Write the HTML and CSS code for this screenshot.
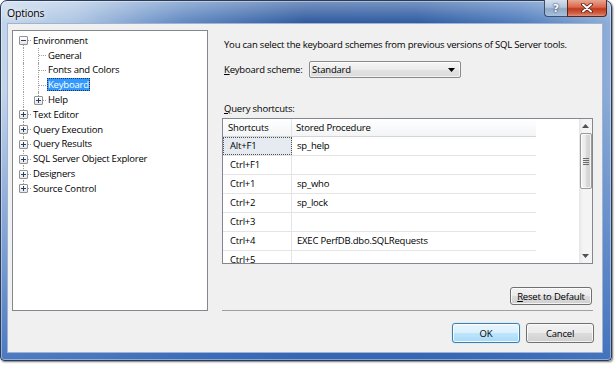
FILE: index.html
```html
<!DOCTYPE html>
<html>
<head>
<meta charset="utf-8">
<title>Options</title>
<link rel="stylesheet" href="styles.css">
</head>
<body>
<div class="window">
  <div class="titlebar">
    <span class="title">Options</span>
    <div class="caption-btns">
      <span class="cbtn help">?</span>
      <span class="cbtn close">
        <svg width="12" height="10" viewBox="0 0 12 10"><path d="M2 1.5 L10 8.5 M10 1.5 L2 8.5" stroke="#4a1a10" stroke-width="3.6" stroke-linecap="round"/><path d="M2 1.5 L10 8.5 M10 1.5 L2 8.5" stroke="#fff" stroke-width="2" stroke-linecap="round"/></svg>
      </span>
    </div>
  </div>
  <div class="client">
    <div class="main">
      <div class="tree">
        <div class="node"><span class="g first"><span class="exp minus"></span></span><span class="lbl">Environment</span></div>
        <div class="node"><span class="g v"></span><span class="g t"></span><span class="lbl">General</span></div>
        <div class="node"><span class="g v"></span><span class="g t"></span><span class="lbl">Fonts and Colors</span></div>
        <div class="node"><span class="g v"></span><span class="g t"></span><span class="lbl sel">Keyboard</span></div>
        <div class="node"><span class="g v"></span><span class="g l"><span class="exp plus"></span></span><span class="lbl">Help</span></div>
        <div class="node"><span class="g t"><span class="exp plus"></span></span><span class="lbl">Text Editor</span></div>
        <div class="node"><span class="g t"><span class="exp plus"></span></span><span class="lbl">Query Execution</span></div>
        <div class="node"><span class="g t"><span class="exp plus"></span></span><span class="lbl">Query Results</span></div>
        <div class="node"><span class="g t"><span class="exp plus"></span></span><span class="lbl">SQL Server Object Explorer</span></div>
        <div class="node"><span class="g t"><span class="exp plus"></span></span><span class="lbl">Designers</span></div>
        <div class="node"><span class="g l"><span class="exp plus"></span></span><span class="lbl">Source Control</span></div>
      </div>
      <div class="panel">
        <p class="desc">You can select the keyboard schemes from previous versions of SQL Server tools.</p>
        <div class="scheme">
          <span class="scheme-label"><u>K</u>eyboard scheme:</span>
          <div class="combo">
            <span>Standard</span>
            <svg width="7" height="4" viewBox="0 0 7 4"><path d="M0 0 H7 L3.5 4 Z" fill="#000"/></svg>
          </div>
        </div>
        <div class="qs-label"><u>Q</u>uery shortcuts:</div>
        <div class="grid">
          <div class="grid-body">
            <div class="hdr"><span class="c1">Shortcuts</span><span class="c2">Stored Procedure</span></div>
            <div class="row"><span class="c1 cur">Alt+F1</span><span class="c2">sp_help</span></div>
            <div class="row"><span class="c1">Ctrl+F1</span><span class="c2"></span></div>
            <div class="row"><span class="c1">Ctrl+1</span><span class="c2">sp_who</span></div>
            <div class="row"><span class="c1">Ctrl+2</span><span class="c2">sp_lock</span></div>
            <div class="row"><span class="c1">Ctrl+3</span><span class="c2"></span></div>
            <div class="row"><span class="c1">Ctrl+4</span><span class="c2">EXEC PerfDB.dbo.SQLRequests</span></div>
            <div class="row"><span class="c1">Ctrl+5</span><span class="c2"></span></div>
          </div>
          <div class="vscroll">
            <div class="sb-btn"><svg width="7" height="4" viewBox="0 0 7 4"><path d="M0 4 H7 L3.5 0 Z" fill="#505050"/></svg></div>
            <div class="thumb"><span class="grip"></span></div>
            <div class="track"></div>
            <div class="sb-btn"><svg width="7" height="4" viewBox="0 0 7 4"><path d="M0 0 H7 L3.5 4 Z" fill="#505050"/></svg></div>
          </div>
        </div>
        <div class="reset-row"><button class="btn reset"><u>R</u>eset to Default</button></div>
      </div>
    </div>
    <div class="footer">
      <button class="btn ok default">OK</button>
      <button class="btn ok">Cancel</button>
    </div>
  </div>
</div>
</body>
</html>
```
FILE: styles.css
```css
* { box-sizing: border-box; }
html, body { margin: 0; padding: 0; background: #fff; }
body {
  width: 615px; height: 366px; overflow: hidden;
  font-family: "Open Sans", "Noto Sans", sans-serif;
  font-size: 9.5px; letter-spacing: -0.2px; color: #000;
}
u { text-decoration: underline; text-underline-offset: 1px; }

.window {
  width: 612px; height: 361px;
  border: 1px solid #2a3c58;
  border-radius: 7px 7px 4px 4px;
  padding: 0 8px 7px 6px;
  display: flex; flex-direction: column;
  background:
    linear-gradient(to bottom, rgba(255,255,255,.35), rgba(255,255,255,0) 22px),
    linear-gradient(to bottom, rgba(60,110,190,0) 0, rgba(60,110,190,0) 25%, rgba(55,105,185,.85) 100%),
    linear-gradient(to right, #c3d5eb 0, #adc5e3 12%, #6189c2 30%, #2f5a9f 50%, #2f5ca2 68%, #4f7cbd 85%, #8eaed8 100%);
  box-shadow: 1px 1px 2px rgba(0,0,0,.55), inset 0 0 0 1px rgba(255,255,255,.4);
}

.titlebar {
  height: 22px; flex: none;
  margin: 0 -8px 0 -6px;
  padding-left: 6px;
  display: flex; align-items: flex-start;
}
.title {
  font-size: 10.5px; line-height: 24px; letter-spacing: -0.2px;
  text-shadow: 0 0 5px #fff, 0 0 8px rgba(255,255,255,.9);
}
.caption-btns { margin-left: auto; margin-right: 4px; margin-top: -1px; display: flex; }
.cbtn {
  height: 17px; display: flex; align-items: center; justify-content: center;
  border: 1px solid #3e4e68; border-top: none;
}
.help {
  width: 23px; border-right: none;
  border-radius: 0 0 0 4px;
  background: linear-gradient(#d4e0ee, #b3c5dc 45%, #8ea8c8 55%, #a9c1de);
  color: #fff; font-weight: bold; font-size: 11px; letter-spacing: 0; font-family: "DejaVu Sans", sans-serif;
  text-shadow: 0 0 2px #2c3c58, 0 0 1px #2c3c58;
}
.close {
  width: 40px;
  border-radius: 0 0 4px 0;
  border-color: #5a2418;
  background: linear-gradient(#e9a794, #d8664a 45%, #c2391c 55%, #d1644a 85%, #e3917c);
}

.client {
  flex: 1;
  background: #f0f0f0;
  border: 1px solid #9fb4d2;
  padding: 6px 8px 0 4px;
}
.main { display: flex; height: 281px; }

.tree {
  width: 196px; height: 281px; flex: none;
  border: 1px solid #828790; background: #fff;
  padding: 2px 0 0 3px;
}
.node { display: flex; align-items: center; height: 14.8px; }
.g { width: 15px; height: 100%; position: relative; flex: none; }
.g::before, .g::after { content: ""; position: absolute; }
.g.v::before, .g.t::before { left: 7px; top: 0; bottom: 0; border-left: 1px dotted #a0a0a0; }
.g.l::before { left: 7px; top: 0; height: 50%; border-left: 1px dotted #a0a0a0; }
.g.first::before { left: 7px; top: 50%; bottom: 0; border-left: 1px dotted #a0a0a0; }
.g.t::after, .g.l::after, .g.first::after { left: 8px; top: 50%; width: 7px; border-top: 1px dotted #a0a0a0; }
.exp {
  position: absolute; left: 3px; top: 50%; margin-top: -4px;
  width: 9px; height: 9px; z-index: 1;
  border: 1px solid #919191; border-radius: 1px;
  background: linear-gradient(#fff, #e6e6e6);
}
.exp::before { content: ""; position: absolute; left: 1px; top: 3px; width: 5px; height: 1px; background: #2a3f66; }
.exp.plus::after { content: ""; position: absolute; left: 3px; top: 1px; width: 1px; height: 5px; background: #2a3f66; }
.lbl { margin-left: 1px; padding: 0 1px; line-height: 13px; white-space: nowrap; }
.lbl.sel { background: #3399ff; color: #fff; outline: 1px dotted #1c3558; outline-offset: -1px; }

.panel {
  width: 371px; margin-left: 14px; flex: none;
  border-bottom: 1px solid #a0a0a0;
  display: flex; flex-direction: column;
}
.desc { margin: 8px 0 0 2px; line-height: 14px; white-space: nowrap; }
.scheme { margin-top: 9px; display: flex; align-items: center; height: 17px; }
.scheme-label { width: 87px; padding-left: 2px; white-space: nowrap; }
.combo {
  width: 152px; height: 17px;
  border: 1px solid #8a8a8a; border-radius: 2px;
  background: linear-gradient(#f6f6f6, #ececec 50%, #e2e2e2 51%, #dcdcdc);
  display: flex; align-items: center; justify-content: space-between;
  padding: 0 5px 0 2px;
  box-shadow: inset 0 0 0 1px rgba(255,255,255,.6);
}
.qs-label { margin: 24px 0 0 2px; line-height: 14px; }
.grid {
  margin-top: 2px; height: 146px;
  border: 1px solid #828790; background: #fff;
  display: flex;
}
.grid-body { flex: 1; overflow: hidden; }
.hdr {
  width: 313px; height: 18px; display: flex;
  border-bottom: 1px solid #d5d5d5;
  background: linear-gradient(#fff, #f3f4f6);
}
.hdr .c1 { width: 69px; padding-left: 5px; border-right: 1px solid #e3e4e6; line-height: 17px; }
.hdr .c2 { width: 244px; padding-left: 4px; line-height: 17px; }
.row { width: 313px; height: 19px; display: flex; border-bottom: 1px solid #e4e4e4; }
.row .c1 { width: 69px; padding-left: 7px; border-right: 1px solid #e4e4e4; line-height: 18px; }
.row .c2 { width: 244px; padding-left: 5px; line-height: 18px; white-space: nowrap; }
.row .c1.cur { background: #e5ebf1; outline: 1px dotted #505050; outline-offset: -1px; }

.vscroll {
  width: 13px; flex: none;
  display: flex; flex-direction: column;
  background: linear-gradient(to right, #e6e6e6, #f4f4f4 30%, #f4f4f4);
}
.sb-btn { height: 14px; display: flex; align-items: center; justify-content: center; }
.thumb {
  height: 56px; margin: 0 0 0 1px;
  border: 1px solid #9a9a9a; border-radius: 2px;
  background: linear-gradient(to right, #f4f4f4, #e8e8e8 50%, #d9d9d9 51%, #d2d2d2);
  box-shadow: inset 0 0 0 1px rgba(255,255,255,.7);
  display: flex; align-items: center; justify-content: center;
}
.grip {
  width: 6px; height: 7px;
  background: repeating-linear-gradient(#6a6a6a 0 1px, transparent 1px 2px);
}
.track { flex: 1; }

.btn {
  font: inherit; letter-spacing: inherit; color: #000; padding: 0;
  border: 1px solid #707070; border-radius: 3px;
  background: linear-gradient(#f2f2f2, #ebebeb 50%, #dddddd 51%, #cfcfcf);
  box-shadow: inset 0 0 0 1px rgba(255,255,255,.75);
}
.reset-row { margin-top: 23px; display: flex; justify-content: flex-end; padding-right: 1px; }
.reset { width: 82px; height: 18px; }
.footer { margin-top: 12px; display: flex; justify-content: flex-end; gap: 6px; }
.ok { width: 68px; height: 20px; }
.default {
  border-color: #3c7fb1;
  background: linear-gradient(#eaf6fd, #d9f0fc 50%, #bee6fd 51%, #a7d9f5);
  box-shadow: inset 0 0 0 1px rgba(255,255,255,.8), 0 0 1px #6cc4f0;
}
```
